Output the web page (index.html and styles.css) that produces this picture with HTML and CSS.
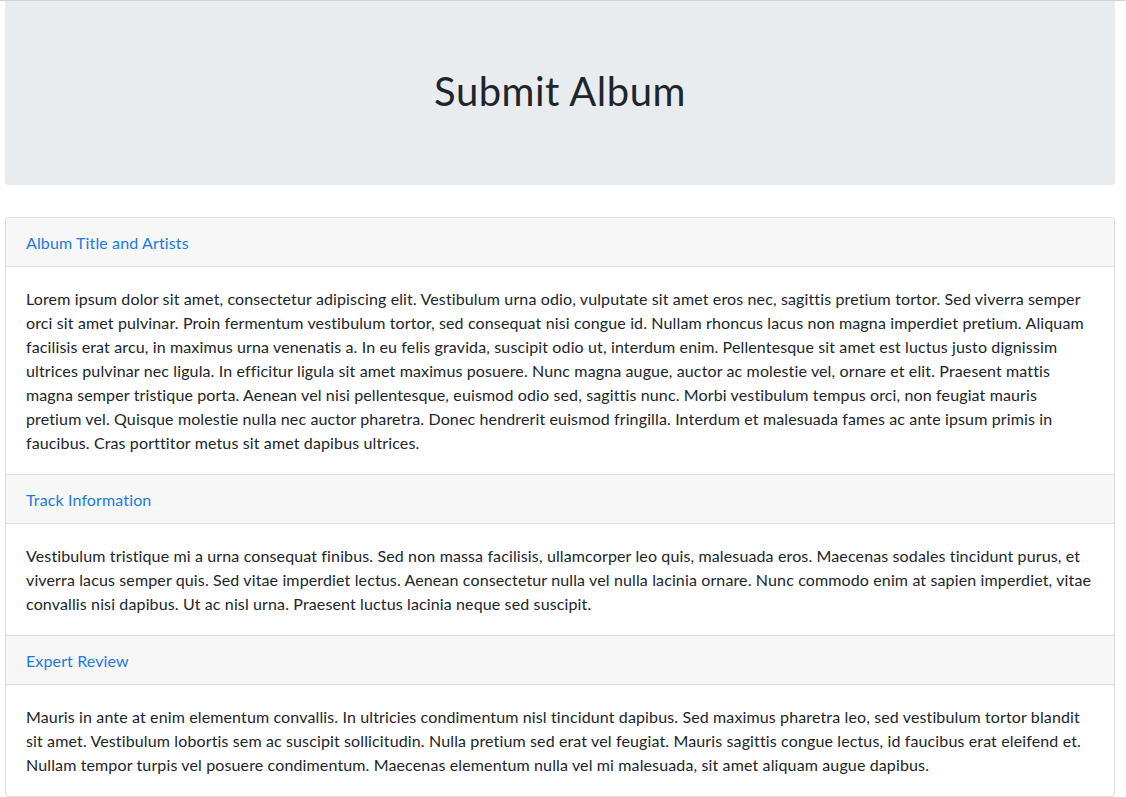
FILE: index.html
```html
<!DOCTYPE html>
<html lang="en">
<head>
<meta charset="utf-8">
<title>Submit Album</title>
<link rel="stylesheet" href="styles.css">
</head>
<body>
<div class="container">
  <div class="jumbotron">
    <h1 class="title">Submit Album</h1>
  </div>
  <div class="accordion">
    <div class="card">
      <div class="card-header"><a class="card-link" href="#">Album Title and Artists</a></div>
      <div class="card-body"><p>Lorem ipsum dolor sit amet, consectetur adipiscing elit. Vestibulum urna odio, vulputate sit amet eros nec, sagittis pretium tortor. Sed viverra semper orci sit amet pulvinar. Proin fermentum vestibulum tortor, sed consequat nisi congue id. Nullam rhoncus lacus non magna imperdiet pretium. Aliquam facilisis erat arcu, in maximus urna venenatis a. In eu felis gravida, suscipit odio ut, interdum enim. Pellentesque sit amet est luctus justo dignissim ultrices pulvinar nec ligula. In efficitur ligula sit amet maximus posuere. Nunc magna augue, auctor ac molestie vel, ornare et elit. Praesent mattis magna semper tristique porta. Aenean vel nisi pellentesque, euismod odio sed, sagittis nunc. Morbi vestibulum tempus orci, non feugiat mauris pretium vel. Quisque molestie nulla nec auctor pharetra. Donec hendrerit euismod fringilla. Interdum et malesuada fames ac ante ipsum primis in faucibus. Cras porttitor metus sit amet dapibus ultrices.</p></div>
      <div class="card-header"><a class="card-link" href="#">Track Information</a></div>
      <div class="card-body"><p>Vestibulum tristique mi a urna consequat finibus. Sed non massa facilisis, ullamcorper leo quis, malesuada eros. Maecenas sodales tincidunt purus, et viverra lacus semper quis. Sed vitae imperdiet lectus. Aenean consectetur nulla vel nulla lacinia ornare. Nunc commodo enim at sapien imperdiet, vitae convallis nisi dapibus. Ut ac nisl urna. Praesent luctus lacinia neque sed suscipit.</p></div>
      <div class="card-header"><a class="card-link" href="#">Expert Review</a></div>
      <div class="card-body"><p>Mauris in ante at enim elementum convallis. In ultricies condimentum nisl tincidunt dapibus. Sed maximus pharetra leo, sed vestibulum tortor blandit sit amet. Vestibulum lobortis sem ac suscipit sollicitudin. Nulla pretium sed erat vel feugiat. Mauris sagittis congue lectus, id faucibus erat eleifend et. Nullam tempor turpis vel posuere condimentum. Maecenas elementum nulla vel mi malesuada, sit amet aliquam augue dapibus.</p></div>
    </div>
  </div>
</div>
</body>
</html>
```

FILE: styles.css
```css
* { box-sizing: border-box; }
html, body { margin: 0; padding: 0; }
body {
  font-family: Lato, "Open Sans", sans-serif;
  font-size: 16px;
  line-height: 24px;
  letter-spacing: 0.13px;
  color: #212529;
  background: #fff;
  border-top: 1px solid #d2d2d2;
}
.container {
  width: 1110px;
  margin-left: 5px;
}
.jumbotron {
  background: #e9ecef;
  border-radius: 0 0 4px 4px;
  padding: 66px 32px 62px;
  margin-bottom: 32px;
}
.title {
  margin: 0 0 8px;
  font-size: 40px;
  font-weight: 400;
  line-height: 48px;
  letter-spacing: 0.5px;
  text-align: center;
  color: #212529;
}
.card {
  border: 1px solid rgba(0,0,0,.125);
  border-radius: 4px;
  overflow: hidden;
  background: #fff;
}
.card-header {
  background: #f7f7f7;
  padding: 13px 20px 11px;
  border-bottom: 1px solid #dfdfdf;
}
.card-body {
  padding: 20px 20px 19px;
  border-bottom: 1px solid #dfdfdf;
}
.card-body:last-child { border-bottom: 0; }
.card-body p { margin: 0; }
.card-link {
  color: #1a7ae6;
  text-decoration: none;
}
```
